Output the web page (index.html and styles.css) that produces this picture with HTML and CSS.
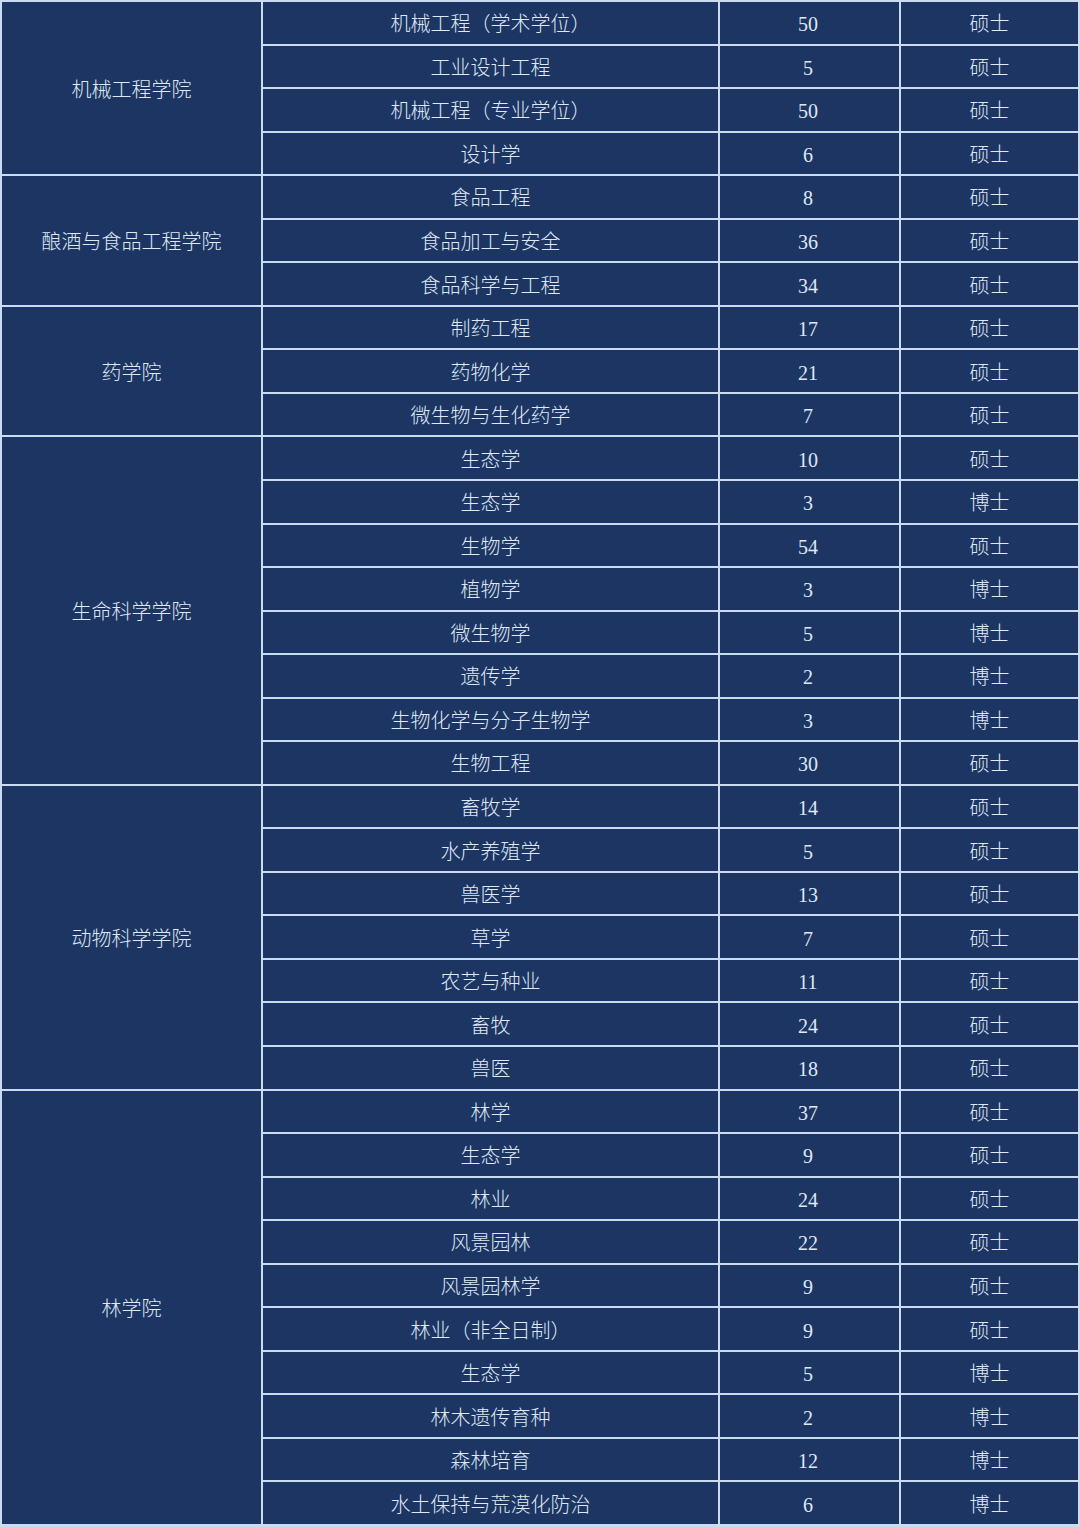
FILE: index.html
```html
<!DOCTYPE html>
<html lang="zh">
<head>
<meta charset="utf-8">
<link rel="stylesheet" href="styles.css">
</head>
<body>
<div class="table">
  <div class="cell college s4">机械工程学院</div>
  <div class="cell">机械工程（学术学位）</div><div class="cell num">50</div><div class="cell">硕士</div>
  <div class="cell">工业设计工程</div><div class="cell num">5</div><div class="cell">硕士</div>
  <div class="cell">机械工程（专业学位）</div><div class="cell num">50</div><div class="cell">硕士</div>
  <div class="cell">设计学</div><div class="cell num">6</div><div class="cell">硕士</div>

  <div class="cell college s3">酿酒与食品工程学院</div>
  <div class="cell">食品工程</div><div class="cell num">8</div><div class="cell">硕士</div>
  <div class="cell">食品加工与安全</div><div class="cell num">36</div><div class="cell">硕士</div>
  <div class="cell">食品科学与工程</div><div class="cell num">34</div><div class="cell">硕士</div>

  <div class="cell college s3">药学院</div>
  <div class="cell">制药工程</div><div class="cell num">17</div><div class="cell">硕士</div>
  <div class="cell">药物化学</div><div class="cell num">21</div><div class="cell">硕士</div>
  <div class="cell">微生物与生化药学</div><div class="cell num">7</div><div class="cell">硕士</div>

  <div class="cell college s8">生命科学学院</div>
  <div class="cell">生态学</div><div class="cell num">10</div><div class="cell">硕士</div>
  <div class="cell">生态学</div><div class="cell num">3</div><div class="cell">博士</div>
  <div class="cell">生物学</div><div class="cell num">54</div><div class="cell">硕士</div>
  <div class="cell">植物学</div><div class="cell num">3</div><div class="cell">博士</div>
  <div class="cell">微生物学</div><div class="cell num">5</div><div class="cell">博士</div>
  <div class="cell">遗传学</div><div class="cell num">2</div><div class="cell">博士</div>
  <div class="cell">生物化学与分子生物学</div><div class="cell num">3</div><div class="cell">博士</div>
  <div class="cell">生物工程</div><div class="cell num">30</div><div class="cell">硕士</div>

  <div class="cell college s7">动物科学学院</div>
  <div class="cell">畜牧学</div><div class="cell num">14</div><div class="cell">硕士</div>
  <div class="cell">水产养殖学</div><div class="cell num">5</div><div class="cell">硕士</div>
  <div class="cell">兽医学</div><div class="cell num">13</div><div class="cell">硕士</div>
  <div class="cell">草学</div><div class="cell num">7</div><div class="cell">硕士</div>
  <div class="cell">农艺与种业</div><div class="cell num">11</div><div class="cell">硕士</div>
  <div class="cell">畜牧</div><div class="cell num">24</div><div class="cell">硕士</div>
  <div class="cell">兽医</div><div class="cell num">18</div><div class="cell">硕士</div>

  <div class="cell college s10">林学院</div>
  <div class="cell">林学</div><div class="cell num">37</div><div class="cell">硕士</div>
  <div class="cell">生态学</div><div class="cell num">9</div><div class="cell">硕士</div>
  <div class="cell">林业</div><div class="cell num">24</div><div class="cell">硕士</div>
  <div class="cell">风景园林</div><div class="cell num">22</div><div class="cell">硕士</div>
  <div class="cell">风景园林学</div><div class="cell num">9</div><div class="cell">硕士</div>
  <div class="cell">林业（非全日制）</div><div class="cell num">9</div><div class="cell">硕士</div>
  <div class="cell">生态学</div><div class="cell num">5</div><div class="cell">博士</div>
  <div class="cell">林木遗传育种</div><div class="cell num">2</div><div class="cell">博士</div>
  <div class="cell">森林培育</div><div class="cell num">12</div><div class="cell">博士</div>
  <div class="cell">水土保持与荒漠化防治</div><div class="cell num">6</div><div class="cell">博士</div>
</div>
</body>
</html>
```

FILE: styles.css
```css
html, body {
  margin: 0;
  padding: 0;
  background: #1d3462;
}
.table {
  width: 1080px;
  height: 1527px;
  box-sizing: border-box;
  padding: 2px 2px 3px 2px;
  display: grid;
  grid-template-columns: 259px 455px 179px 1fr;
  grid-template-rows: repeat(35, 1fr);
  gap: 2px;
  background: #c9dcf2;
}
.cell {
  background: #1d3562;
  color: #dfe8f6;
  display: flex;
  align-items: center;
  justify-content: center;
  font-family: "Noto Sans CJK SC", sans-serif;
  font-weight: 300;
  font-size: 20px;
  line-height: 1;
  padding-top: 1px;
}
.num {
  font-family: "Liberation Serif", serif;
  font-weight: 400;
  font-size: 20px;
  padding-top: 3px;
  padding-right: 3px;
}
.college { grid-column: 1; }
.s3 { grid-row: span 3; }
.s4 { grid-row: span 4; }
.s7 { grid-row: span 7; }
.s8 { grid-row: span 8; }
.s10 { grid-row: span 10; }
```
